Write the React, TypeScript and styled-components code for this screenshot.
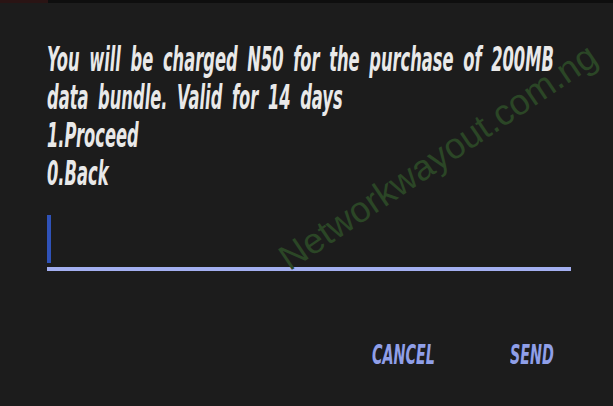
import React from 'react';
import styled, { createGlobalStyle } from 'styled-components';

const GlobalStyle = createGlobalStyle`
  html, body {
    margin: 0;
    padding: 0;
    background: #1c1c1c;
  }
`;

const Screen = styled.div`
  position: relative;
  width: 613px;
  height: 406px;
  overflow: hidden;
  background: #1c1c1c;
  display: flex;
  flex-direction: column;
`;

const TopStrip = styled.div`
  height: 3px;
  background: #0e0e0e;
  display: flex;
`;

const StripMark = styled.div`
  width: 48px;
  background: #2a1414;
`;

const Dialog = styled.div`
  padding: 38px 42px 0 47px;
  display: flex;
  flex-direction: column;
`;

const condensed = `
  font-family: 'DejaVu Sans', sans-serif;
  font-style: italic;
  font-weight: bold;
  white-space: nowrap;
  transform-origin: left top;
`;

const Message = styled.div`
  ${condensed}
  width: 1020px;
  font-size: 33px;
  line-height: 38px;
  word-spacing: 8px;
  color: #e9e9e9;
  transform: scaleX(0.494);
`;

const Line = styled.div``;

const InputArea = styled.div`
  margin-top: 22px;
  height: 52px;
  border-bottom: 4px solid #a3aff0;
  display: flex;
  align-items: flex-start;
  width: 524px;
`;

const Caret = styled.div`
  width: 4px;
  height: 48px;
  background: #2f52b8;
`;

const Actions = styled.div`
  display: flex;
  padding: 70px 0 0 325px;
`;

const ButtonSlot = styled.button<{ $width: number }>`
  width: ${(p) => p.$width}px;
  background: none;
  border: none;
  padding: 0;
  text-align: left;
  overflow: visible;
`;

const ButtonLabel = styled.span`
  ${condensed}
  display: inline-block;
  font-size: 26px;
  line-height: 28px;
  color: #8f9fe8;
  transform: scaleX(0.55);
`;

const Watermark = styled.div`
  position: absolute;
  left: 438px;
  top: 157px;
  transform: translate(-50%, -50%) rotate(-34deg);
  font-family: 'Liberation Sans', Arial, sans-serif;
  font-size: 36px;
  color: #2b4626;
  white-space: nowrap;
  pointer-events: none;
`;

const App: React.FC = () => {
  return (
    <>
      <GlobalStyle />
      <Screen>
        <TopStrip>
          <StripMark />
        </TopStrip>
        <Dialog>
          <Message>
            <Line>You will be charged N50 for the purchase of 200MB</Line>
            <Line>data bundle. Valid for 14 days</Line>
            <Line>1.Proceed</Line>
            <Line>0.Back</Line>
          </Message>
          <InputArea>
            <Caret />
          </InputArea>
          <Actions>
            <ButtonSlot $width={138}>
              <ButtonLabel>CANCEL</ButtonLabel>
            </ButtonSlot>
            <ButtonSlot $width={60}>
              <ButtonLabel>SEND</ButtonLabel>
            </ButtonSlot>
          </Actions>
        </Dialog>
        <Watermark>Networkwayout.com.ng</Watermark>
      </Screen>
    </>
  );
};

export default App;
